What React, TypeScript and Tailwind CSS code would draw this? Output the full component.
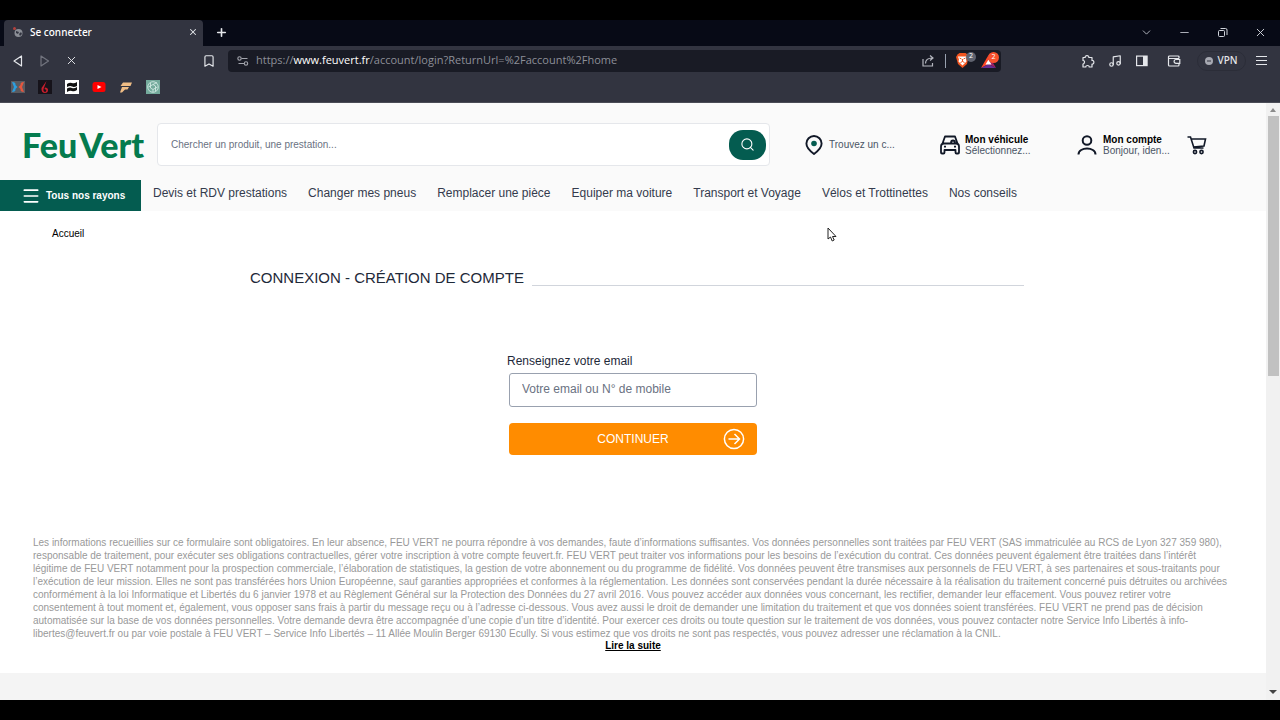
import React from 'react';
import { ChevronDown, Minus, X, Plus, Bookmark, Music, Search, Menu } from 'lucide-react';

const navLinks = [
  'Devis et RDV prestations',
  'Changer mes pneus',
  'Remplacer une pièce',
  'Equiper ma voiture',
  'Transport et Voyage',
  'Vélos et Trottinettes',
  'Nos conseils',
];

const legalLines = [
  'Les informations recueillies sur ce formulaire sont obligatoires. En leur absence, FEU VERT ne pourra répondre à vos demandes, faute d’informations suffisantes. Vos données personnelles sont traitées par FEU VERT (SAS immatriculée au RCS de Lyon 327 359 980),',
  'responsable de traitement, pour exécuter ses obligations contractuelles, gérer votre inscription à votre compte feuvert.fr. FEU VERT peut traiter vos informations pour les besoins de l’exécution du contrat. Ces données peuvent également être traitées dans l’intérêt',
  'légitime de FEU VERT notamment pour la prospection commerciale, l’élaboration de statistiques, la gestion de votre abonnement ou du programme de fidélité. Vos données peuvent être transmises aux personnels de FEU VERT, à ses partenaires et sous-traitants pour',
  'l’exécution de leur mission. Elles ne sont pas transférées hors Union Européenne, sauf garanties appropriées et conformes à la réglementation. Les données sont conservées pendant la durée nécessaire à la réalisation du traitement concerné puis détruites ou archivées',
  'conformément à la loi Informatique et Libertés du 6 janvier 1978 et au Règlement Général sur la Protection des Données du 27 avril 2016. Vous pouvez accéder aux données vous concernant, les rectifier, demander leur effacement. Vous pouvez retirer votre',
  'consentement à tout moment et, également, vous opposer sans frais à partir du message reçu ou à l’adresse ci-dessous. Vous avez aussi le droit de demander une limitation du traitement et que vos données soient transférées. FEU VERT ne prend pas de décision',
  'automatisée sur la base de vos données personnelles. Votre demande devra être accompagnée d’une copie d’un titre d’identité. Pour exercer ces droits ou toute question sur le traitement de vos données, vous pouvez contacter notre Service Info Libertés à info-',
  'libertes@feuvert.fr ou par voie postale à FEU VERT – Service Info Libertés – 11 Allée Moulin Berger 69130 Ecully. Si vous estimez que vos droits ne sont pas respectés, vous pouvez adresser une réclamation à la CNIL.',
];

const TabStrip: React.FC = () => (
  <div className="flex h-[26px] items-center bg-[#070a16] pl-1 text-gray-200">
    <div className="flex h-full w-[199px] items-center rounded-t bg-[#323440] pb-0.5 pl-2 pr-[3px]">
      <svg className="size-3" viewBox="0 0 12 12">
        <circle cx="6.5" cy="7" r="4" fill="#8b8e96" />
        <path d="M4 5l3 1-1 2-2-1zM7 8l2-2 1 2-2 2z" fill="#323440" />
        <circle cx="2.5" cy="2.5" r="1.5" fill="#b3413d" />
      </svg>
      <span className="ml-1.5 flex-1 font-['Noto_Sans'] text-[10px] font-medium text-white">Se connecter</span>
      <button aria-label="Fermer l’onglet" className="p-0.5"><X size={10} strokeWidth={2.5} /></button>
    </div>
    <button aria-label="Nouvel onglet" className="ml-3 pb-0.5"><Plus size={13} strokeWidth={3} /></button>
    <div className="ml-auto flex items-center gap-[25px] pb-0.5 pr-[13px] text-gray-300">
      <button aria-label="Onglets"><ChevronDown size={13} strokeWidth={1.5} /></button>
      <button aria-label="Réduire"><Minus size={13} strokeWidth={1.5} /></button>
      <button aria-label="Agrandir">
        <svg className="size-[13px]" viewBox="0 0 13 13" fill="none" stroke="currentColor">
          <rect x="2.5" y="4.5" width="6" height="6" rx="1" />
          <path d="M4.5 2.5h5q1.500 0 1.500 1.500v5" />
        </svg>
      </button>
      <button aria-label="Quitter"><X size={13} strokeWidth={1.75} /></button>
    </div>
  </div>
);

const AddressBar: React.FC = () => (
  <div className="flex h-[22px] min-w-0 flex-1 items-center rounded-sm bg-[#191b25] pl-2 pr-[3px]">
    <svg className="size-3.5 shrink-0" viewBox="0 0 14 14" fill="none" stroke="#a3a5ad" strokeWidth="1.1">
      <circle cx="3.500" cy="4.500" r="1.700" />
      <circle cx="10" cy="9.500" r="1.700" />
      <path d="M5.500 4.500h6M2.500 9.500h5.500" />
    </svg>
    <span className="ml-1.5 flex-1 truncate font-['Open_Sans'] text-[11px] text-[#8d8f98]">
      https://<span className="text-white">www.feuvert.fr</span>/account/login?ReturnUrl=%2Faccount%2Fhome
    </span>
    <button aria-label="Partager">
      <svg className="size-3.5" viewBox="0 0 14 14" fill="none" stroke="#b5b7bf" strokeWidth="1.2">
        <path d="M2 5v7h9.500V9M4.500 9.500c0-4 2.500-5.500 7-5.500M9 1.500L12 4 9 6.500" />
      </svg>
    </button>
    <span className="ml-2.5 h-3.5 w-px bg-gray-400" />
    <button aria-label="Brave Shields" className="relative ml-2">
      <svg className="size-[18px]" viewBox="0 0 18 18">
        <path d="M3.500 2.500l2-1.500h6l2 1.500 1 2.500-1.500 7L8.500 16 4 12 2 5z" fill="#f1541f" />
        <path d="M4 4.500h9l-1 3 .5 2-4 4-4-4 .5-2z" fill="#fff" />
        <path d="M5.500 6l2 1M11.500 6l-2 1M8.500 7v2.500M6.500 10.500l2-1 2 1" stroke="#f1541f" fill="none" />
      </svg>
      <span className="absolute -right-1 top-0 flex size-[10px] items-center justify-center rounded-full bg-[#60636f] font-['Noto_Sans'] text-[7px] text-white">2</span>
    </button>
    <button aria-label="Brave Rewards" className="relative ml-2">
      <svg className="size-[18px]" viewBox="0 0 18 18">
        <path d="M8.500 3L1 16l7.500-4z" fill="#ff4724" />
        <path d="M1 16h15l-7.500-4z" fill="#662d91" />
        <path d="M8.500 3L16 16l-7.500-4z" fill="#9e1f63" />
        <path d="M8.500 7.500l-3 5h6z" fill="#fff" />
      </svg>
      <span className="absolute -right-px top-0 flex size-[11px] items-center justify-center rounded-full bg-[#f8512d] font-['Noto_Sans'] text-[7px] text-white">2</span>
    </button>
  </div>
);

const Toolbar: React.FC = () => (
  <div className="flex h-[29px] items-center bg-[#323440] px-3 text-gray-200">
    <button aria-label="Précédent">
      <svg className="size-3" viewBox="0 0 12 12" fill="none" stroke="currentColor" strokeWidth="1.2" strokeLinejoin="round">
        <path d="M9.500 1v10L2 6z" />
      </svg>
    </button>
    <button aria-label="Suivant" className="ml-[15px] text-[#73757f]">
      <svg className="size-3" viewBox="0 0 12 12" fill="none" stroke="currentColor" strokeWidth="1.2" strokeLinejoin="round">
        <path d="M2 1v10l7.500-5z" />
      </svg>
    </button>
    <button aria-label="Arrêter" className="ml-3.5"><X size={13} strokeWidth={1.75} /></button>
    <button aria-label="Favori" className="ml-[124px] mr-3"><Bookmark size={14} strokeWidth={2} /></button>
    <AddressBar />
    <div className="ml-20 flex items-center">
      <button aria-label="Extensions">
        <svg className="size-3.5" viewBox="0 0 14 14" fill="none" stroke="currentColor" strokeWidth="1.2" strokeLinejoin="round">
          <path d="M2 3.500h2.200C3.500 1 8.500 1 7.800 3.500H11v3c2.500-.5 2.500 4 0 3.500v3H8.200c.3-2-3.700-2-3.400 0H2v-3c2-.3 2-3.700 0-3.500z" />
        </svg>
      </button>
      <button aria-label="Musique" className="ml-[13px]"><Music size={14} strokeWidth={2} /></button>
      <button aria-label="Panneau latéral" className="ml-[13px]">
        <svg className="size-3.5" viewBox="0 0 14 14">
          <rect x="1.600" y="2.100" width="10.500" height="9.500" fill="none" stroke="currentColor" strokeWidth="1.2" />
          <path d="M8 2h4v10H8z" fill="currentColor" />
        </svg>
      </button>
      <button aria-label="Portefeuille" className="ml-[18px]">
        <svg className="size-3.5" viewBox="0 0 14 14" fill="none" stroke="currentColor" strokeWidth="1.2">
          <path d="M12 4.500V3q0-1-1-1H2.500q-1 0-1 1v8q0 1 1 1H11q1 0 1-1V9.500M1.500 4.500H12M12.800 5.500H9a1.800 1.800 0 000 3.800h3.800z" />
        </svg>
      </button>
      <button className="ml-4 flex h-5 w-[49px] items-center justify-center gap-1 rounded-full border border-[#2b2d38] font-['Noto_Sans'] text-[10px] font-medium">
        <svg className="size-2" viewBox="0 0 8 8"><circle cx="4" cy="4" r="4" fill="#a7a9b2" /><path d="M2 4h4" stroke="#323440" /></svg>
        VPN
      </button>
      <button aria-label="Menu" className="ml-2">
        <svg className="size-3.5" viewBox="0 0 14 14" stroke="currentColor" strokeWidth="1.2"><path d="M2 2.500h11M2 6.500h11M2 10.500h11" /></svg>
      </button>
    </div>
  </div>
);

const BookmarksBar: React.FC = () => (
  <div className="flex h-7 items-center gap-[13px] border-b border-[#4a4c56] bg-[#323440] pb-[3px] pl-[11px]">
    <svg className="size-3.5" viewBox="0 0 14 14">
      <path d="M0 1h14v12H0z" fill="#5a5b61" />
      <path d="M1 2q4 0 3.500 3L6.500 7l-2 2q.5 3-3.500 3l2-5z" fill="#2b9fe0" />
      <path d="M13 2q-4 0-3.500 3L7.500 7l2 2q-.5 3 3.500 3l-2-5z" fill="#e5563e" />
    </svg>
    <svg className="size-3.5" viewBox="0 0 14 14">
      <path d="M0 0h14v14H0z" fill="#16131a" />
      <path d="M8.500 1L3.500 8q-.5 5 3.500 5 3 0 3-3 0-2.500-3-2.500l-.5 1.500 2 1-1 2q-2.500 0-2-3z" fill="#c81e2c" />
    </svg>
    <svg className="size-3.5" viewBox="0 0 14 14">
      <path d="M0 0h14v14H0z" fill="#fff" />
      <path d="M2 4q3-2 5-1t5-1v4q-3 1.500-5 .5T2 7zM2 8.500q3-1.500 5-.5t5-1V10q-3 2-5 1t-5 1z" fill="#111" />
    </svg>
    <svg className="size-3.5" viewBox="0 0 14 14">
      <rect x="0.5" y="2" width="13" height="10" rx="2.5" fill="#f00" />
      <path d="M5.500 5l4 2-4 2z" fill="#fff" />
    </svg>
    <svg className="size-3.5" viewBox="0 0 14 14" fill="#f0bd85">
      <path d="M4 2.500h9L11.500 6H1.500zM3 7h7L8.500 9.500H6l-3 3H1z" />
    </svg>
    <svg className="size-3.5" viewBox="0 0 14 14" fill="none">
      <path d="M0 0h14v14H0z" fill="#74aa9c" />
      <g stroke="#d9efe8" strokeWidth="0.8">
        <circle cx="7" cy="7" r="5.300" />
        <path d="M4.500 3v5L7 9.500l4.500-2.500M9.500 11V6L7 4.500 2.500 7M7 4.500L11 2.500M7 9.500V12" />
      </g>
    </svg>
  </div>
);

const Header: React.FC = () => (
  <header className="bg-[#fafafa]">
    <div className="flex h-[77px] items-center pb-1 pl-[22px] pt-2.5">
      <a href="#" className="flex w-[123px] items-center gap-0.5 font-['Lato'] text-[34px] leading-9 font-black text-[#047b4e]">
        <span>Feu</span> <span>Vert</span>
      </a>
      <form className="ml-3 flex h-[43px] min-w-0 flex-1 items-center rounded border border-gray-200 bg-white pl-[13px] pr-[3px]">
        <input aria-label="Rechercher" placeholder="Chercher un produit, une prestation..." className="min-w-0 flex-1 text-[10px] outline-none placeholder:text-gray-500" />
        <button type="button" aria-label="Lancer la recherche" className="flex h-[30px] w-[37px] items-center justify-center rounded-[14px] bg-[#045c50] text-white">
          <Search size={15} strokeWidth={1.75} />
        </button>
      </form>
      <a href="#" className="ml-[35px] flex w-[135px] items-center gap-1.5 text-[10px] text-gray-600">
        <svg className="h-5 w-[18px]" viewBox="0 0 18 20" fill="none">
          <path d="M9 1a7.600 7.600 0 00-7.600 7.600C1.400 12.500 5.500 16.500 9 19c3.500-2.500 7.600-6.500 7.600-10.400A7.600 7.600 0 009 1z" stroke="#111827" strokeWidth="1.9" />
          <circle cx="9" cy="8.500" r="2.800" fill="#045c50" />
        </svg>
        Trouvez un c...
      </a>
      <a href="#" className="flex w-[137px] items-center gap-[5px] text-[10px] leading-[11px] text-gray-600">
        <svg className="size-5" viewBox="0 0 20 20" fill="none" stroke="#111827" strokeWidth="1.8" strokeLinejoin="round">
          <path d="M2.500 8.500L5 1.500h10l2.500 7M1 17.500v-6q0-3 3-3h12q3 0 3 3v6q0 1-1 1h-1.500q-1 0-1-1V15h-11v2.500q0 1-1 1H2q-1 0-1-1zM4 11.700h2M14 11.700h2M11 8q0-2.500 2-2.500t2 2.500" />
        </svg>
        <span><b className="block text-black">Mon véhicule</b>Sélectionnez...</span>
      </a>
      <a href="#" className="flex w-[110px] items-center gap-1.5 text-[10px] leading-[11px] text-gray-600">
        <svg className="size-5" viewBox="0 0 20 20" fill="none" stroke="#111827" strokeWidth="2">
          <circle cx="10" cy="5.500" r="4.300" />
          <path d="M1.500 19.500c0-8 17-8 17 0" />
        </svg>
        <span><b className="block text-black">Mon compte</b>Bonjour, iden...</span>
      </a>
      <a href="#" aria-label="Panier" className="mr-[59px]">
        <svg className="size-5" viewBox="0 0 20 20" fill="none" stroke="#111827" strokeWidth="1.6">
          <path d="M.5 2h3L7 13h9.500M4.200 4H18.500l-1.500 7L6.500 12" />
          <circle cx="8" cy="17" r="1.600" />
          <circle cx="14.500" cy="17" r="1.600" />
        </svg>
      </a>
    </div>
    <nav className="flex h-[31px] items-center gap-[21px] text-xs text-[#343b4d]">
      <button className="-mr-[9px] flex h-full w-[141px] shrink-0 items-center gap-[5px] bg-[#045c50] pl-[21px] text-[10px] font-bold text-white">
        <Menu size={20} strokeWidth={2} />
        Tous nos rayons
      </button>
      {navLinks.map((link) => (
        <a key={link} href="#" className="whitespace-nowrap pb-[5px]">{link}</a>
      ))}
    </nav>
  </header>
);

const Login: React.FC = () => (
  <main className="flex-1">
    <a href="#" className="ml-[52px] mt-[17px] block w-fit text-[10px] leading-3 text-black">Accueil</a>
    <div className="mt-[26px] pl-2">
      <div className="mx-auto flex w-[774px] max-w-full items-end gap-2">
        <h1 className="whitespace-nowrap text-[15px] leading-6 text-gray-800">CONNEXION - CRÉATION DE COMPTE</h1>
        <span className="mb-1 h-px flex-1 bg-gray-300" />
      </div>
    </div>
    <form className="mx-auto mt-[61px] w-[248px] text-xs">
      <label htmlFor="email" className="-ml-0.5 block leading-5 text-gray-800">Renseignez votre email</label>
      <input id="email" placeholder="Votre email ou N° de mobile" className="mt-0.5 block h-[34px] w-full rounded-[3px] border border-gray-400 bg-white px-3 pb-0.5 outline-none placeholder:text-gray-500" />
      <button type="button" className="mt-4 flex h-8 w-full items-center rounded-sm bg-[#ff8c00] px-3 text-white">
        <span className="flex-1 pl-[22px]">CONTINUER</span>
        <svg className="size-[22px]" viewBox="0 0 22 22" fill="none" stroke="currentColor" strokeWidth="1.5">
          <circle cx="11" cy="11" r="9.600" />
          <path d="M5.500 11h11M11.500 6l5 5-5 5" />
        </svg>
      </button>
    </form>
    <div className="mt-[81px] pl-[33px] text-[10px] leading-[13px] text-[#999]">
      {legalLines.map((line) => (
        <p key={line} className="whitespace-nowrap">{line}</p>
      ))}
    </div>
    <a href="#" className="mx-auto block w-fit text-[10px] leading-[11px] font-bold text-black underline">Lire la suite</a>
  </main>
);

const Scrollbar: React.FC = () => (
  <div className="flex w-3.5 shrink-0 flex-col items-center bg-[#f1f1f1] py-[3px]">
    <svg className="h-2 w-2" viewBox="0 0 8 8"><path d="M1 6l3-4 3 4z" fill="#8b8b8b" /></svg>
    <div className="mt-0.5 h-[260px] w-[11px] bg-[#c1c1c1]" />
    <svg className="mt-auto h-2 w-2" viewBox="0 0 8 8"><path d="M0 1l4 4 4-4z" fill="#444" /></svg>
  </div>
);

export default function App() {
  return (
    <div className="relative flex min-h-screen flex-col bg-black py-5 font-['Liberation_Sans',sans-serif]">
      <TabStrip />
      <Toolbar />
      <BookmarksBar />
      <div className="flex flex-1 bg-white">
        <div className="flex min-w-0 flex-1 flex-col">
          <Header />
          <Login />
          <footer className="h-[27px] bg-[#f4f4f4]" />
        </div>
        <Scrollbar />
      </div>
      <svg className="absolute left-[827px] top-[227px] h-[15px] w-[10px]" viewBox="0 0 10 15">
        <path d="M1 1v11l2.500-2 1.700 4 2-1-1.700-3.500H9z" fill="#fff" stroke="#222" />
      </svg>
    </div>
  );
}
